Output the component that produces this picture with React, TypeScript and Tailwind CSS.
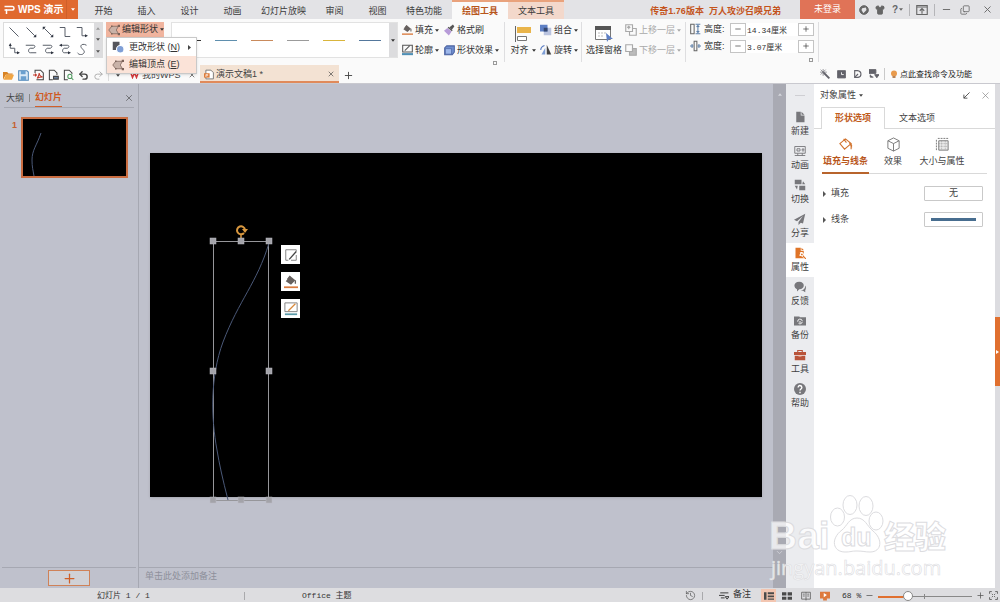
import type { ReactNode } from "react";
import {
  ChevronDown,
  Copy,
  History,
  Minus,
  Plus,
  Redo2,
  Shirt,
  Undo2,
  X,
} from "lucide-react";

function Caret({ className = "" }: { className?: string }) {
  return (
    <svg className={`w-1 h-[3px] shrink-0 ${className}`} viewBox="0 0 5 3">
      <path d="M0 0h5L2.5 3z" fill="currentColor" />
    </svg>
  );
}

function Ico({ children, className = "w-3 h-3" }: { children: ReactNode; className?: string }) {
  return (
    <svg className={`shrink-0 ${className}`} viewBox="0 0 16 16" fill="none" stroke="currentColor" strokeWidth="1.5">
      {children}
    </svg>
  );
}

const connectors: { name: string; d: string; dots?: string }[] = [
  { name: "直线", d: "M2 2l12 12" },
  { name: "箭头", d: "M2 2l11 11", dots: "M15 15v-4l-4 4z" },
  { name: "双箭头", d: "M3 3l10 10", dots: "M15 15v-4l-4 4zM1 1v4l4-4z" },
  { name: "肘形", d: "M1 2h7v12h7" },
  { name: "肘形箭头", d: "M1 2h7v11h6", dots: "M16 13l-4-2v4z" },
  { name: "肘形双箭头", d: "M3 3v4h6v6h5", dots: "M16 13l-4-2v4zM3 0L1 4h4z" },
  { name: "曲线", d: "M1 3h10c3 0 3 3 0 4H7c-3 1-3 6 0 6h8" },
  { name: "曲线箭头", d: "M1 3h10c3 0 3 3 0 4H7c-3 1-3 6 0 6h7", dots: "M16 13l-4-2v4z" },
  { name: "曲线双箭头", d: "M2 3h9c3 0 3 3 0 4H7c-3 1-3 6 0 6h7", dots: "M16 13l-4-2v4zM0 3l4-2v4z" },
  { name: "自由曲线", d: "M14 3C9 0 5 3 7 6s6 5 3 8-7 1-8-1" },
];

const lineStyles = [
  { name: "黑色", color: "bg-[#333333]" },
  { name: "蓝色", color: "bg-[#5f8fae]" },
  { name: "橙色", color: "bg-[#c98a5c]" },
  { name: "灰色", color: "bg-[#9b9b9b]" },
  { name: "黄色", color: "bg-[#d9b53c]" },
  { name: "深蓝", color: "bg-[#54779c]" },
];

const menuTabs = ["开始", "插入", "设计", "动画", "幻灯片放映", "审阅", "视图", "特色功能"];

function PentagonIcon() {
  return (
    <Ico className="w-3 h-3 text-[#7b6359]">
      <path d="M1 8l4-5h9l-3 5 3 5H5z" fill="#c9b2a8" strokeWidth="1" />
      <path d="M13 1h3v3h-3zM13 12h3v3h-3zM4 2h2v2H4zM4 12h2v2H4z" fill="currentColor" stroke="none" />
    </Ico>
  );
}

function TitleBar() {
  return (
    <header className="flex h-[19px] shrink-0 items-stretch bg-[#e3e3e6] text-[9px] text-[#3c3c3c]">
      <button className="flex w-[78px] items-center bg-[#e0692f] pl-1 font-bold text-white text-[10px]">
        <svg className="w-[11px] h-[10px] mr-[3px]" viewBox="0 0 22 20" fill="none" stroke="#fff" strokeWidth="3">
          <path d="M1 3h16c4 0 4 7 0 7H5v8" />
          <path d="M1 10h5" />
        </svg>
        WPS 演示
        <span className="ml-auto flex h-full w-3 items-center justify-center border-l border-[#cf5f28]">
          <Caret />
        </span>
      </button>
      <nav className="flex items-stretch pl-1">
        {menuTabs.map((t) => (
          <button key={t} className="min-w-[43px] px-[7px] pt-1">
            {t}
          </button>
        ))}
        <button className="ml-[3px] w-14 border-t-2 border-[#e9a27c] bg-[#fafafa] pt-[2px] font-bold text-[#b8561b]">绘图工具</button>
        <button className="w-14 border-t-2 border-[#e9a27c] bg-[#f3d8cb] pt-[2px]">文本工具</button>
      </nav>
      <div className="ml-auto flex items-center">
        <a href="#" className="mr-[19px] pt-1 font-bold text-[#c4541c]">
          传奇1.76版本&nbsp; 万人攻沙召唤兄弟
        </a>
        <button className="h-full w-[55px] bg-[#e07357] text-white">未登录</button>
        <div className="flex items-center text-[#666]">
          <button aria-label="换肤" className="ml-1">
            <Ico className="w-[10px] h-[10px]">
              <circle cx="8" cy="8" r="7" fill="#666" />
              <path d="M5 5l6-1 1 4-5 5-3-5z" fill="#e3e3e6" stroke="none" />
            </Ico>
          </button>
          <button aria-label="皮肤" className="ml-[6px]">
            <Shirt size={10} fill="#666" />
          </button>
          <button aria-label="帮助" className="ml-[7px] flex items-center gap-px text-[10px] font-bold">
            ?<Caret />
          </button>
          <span className="mx-[6px] h-3 w-px bg-[#b5b5b8]" />
          <button aria-label="隐藏功能区">
            <Ico className="w-3 h-3">
              <path d="M1 2h14v12H1zM1 4h14M8 13V7M5 9l3-3 3 3" />
            </Ico>
          </button>
          <span className="mx-[6px] h-3 w-px bg-[#b5b5b8]" />
          <button aria-label="最小化" className="mr-2">
            <Minus size={11} />
          </button>
          <button aria-label="还原" className="mr-3">
            <Copy size={10} className="-scale-x-100 rotate-180" />
          </button>
          <button aria-label="关闭" className="mr-[7px]">
            <X size={11} />
          </button>
        </div>
      </div>
    </header>
  );
}

function Cmd({ icon, label, caret, disabled }: { icon: ReactNode; label: string; caret?: boolean; disabled?: boolean }) {
  return (
    <button disabled={disabled} className={`flex h-4 items-center gap-[2px] whitespace-nowrap ${disabled ? "text-[#a9a9a9]" : ""}`}>
      {icon}
      {label}
      {caret && <Caret />}
    </button>
  );
}

function BucketIcon({ className = "w-[11px] h-3" }: { className?: string }) {
  return (
    <Ico className={className}>
      <path d="M7 1l6 5-5 5-6-4z" fill="#66605e" stroke="none" />
      <path d="M13 6v4M4 5l3-4" stroke="#66605e" />
      <path d="M0 14h16" stroke="#d97b3f" strokeWidth="2" />
    </Ico>
  );
}

function Divider() {
  return <span className="h-10 w-px shrink-0 bg-[#dedee0]" />;
}

function SizeField({ id, label, value, icon }: { id: string; label: string; value: string; icon: ReactNode }) {
  return (
    <div className="flex h-[14px] items-center">
      {icon}
      <label htmlFor={id} className="ml-[3px] w-[26px] whitespace-nowrap">
        {label}:
      </label>
      <button aria-label={`减小${label}`} className="flex h-[13px] w-4 items-center justify-center border border-[#c4c4c4] bg-white">
        <Minus size={8} />
      </button>
      <input
        id={id}
        defaultValue={value}
        className="h-[13px] w-[52px] bg-white pl-px font-['Liberation_Mono','Noto_Sans_CJK_SC',monospace] text-[8px] outline-none"
      />
      <button aria-label={`增大${label}`} className="flex h-[13px] w-4 items-center justify-center border border-[#c4c4c4] bg-white">
        <Plus size={8} />
      </button>
    </div>
  );
}

function Ribbon() {
  return (
    <section className="flex h-[46px] shrink-0 items-start bg-[#fafafa] pt-[3px] text-[9px] text-[#333]">
      <div className="ml-[3px] flex h-9 border border-[#dcdcdc] bg-white">
        <div className="grid grid-cols-5 pl-px">
          {connectors.map((c) => (
            <button key={c.name} aria-label={c.name} className="flex h-[17px] w-[17px] items-center justify-center">
              <svg className="w-3 h-3" viewBox="0 0 16 16">
                <path d={c.d} fill="none" stroke="#555b66" strokeWidth="1.3" />
                {c.dots && <path d={c.dots} fill="#2e3440" />}
              </svg>
            </button>
          ))}
        </div>
        <div className="ml-1 flex w-2 flex-col items-center justify-around bg-[#dcdcde] text-[#555]">
          <Caret className="rotate-180 text-[#999]" />
          <Caret />
          <Caret />
        </div>
      </div>

      <div className="relative ml-[3px]">
        <button className="flex h-[15px] w-[58px] items-center gap-[2px] whitespace-nowrap bg-[#f0b49e] pl-[2px]">
          <PentagonIcon />
          编辑形状
          <Caret />
        </button>
        <ul className="absolute left-0 top-[15px] z-20 w-[91px] border border-[#c9c9c9] bg-white shadow">
          <li>
            <button className="flex h-[18px] w-full items-center gap-[5px] pl-[5px]">
              <Ico className="w-3 h-3">
                <path d="M1 1h9v6l-4 5H1z" fill="#55565c" stroke="none" />
                <circle cx="11" cy="11" r="5" fill="#7f9fd6" stroke="#fff" />
              </Ico>
              <span>
                更改形状 (<u>N</u>)
              </span>
              <svg className="ml-auto mr-[5px] w-[3px] h-[5px]" viewBox="0 0 3 5">
                <path d="M0 0v5l3-2.500z" fill="#444" />
              </svg>
            </button>
          </li>
          <li>
            <button className="flex h-[17px] w-full items-center gap-[5px] bg-[#fbe3d8] pl-[5px]">
              <PentagonIcon />
              <span>
                编辑顶点 (<u>E</u>)
              </span>
            </button>
          </li>
        </ul>
      </div>

      <div className="ml-[7px] flex h-9 border border-[#e2e2e2] bg-white">
        {lineStyles.map((l) => (
          <button key={l.name} aria-label={l.name} className="flex w-9 items-center justify-center">
            <span className={`h-px w-[22px] ${l.color}`} />
          </button>
        ))}
        <span className="ml-px flex w-2 items-center justify-center bg-[#dcdcde]">
          <Caret />
        </span>
      </div>

      <div className="ml-1 flex w-[102px]">
        <div className="flex w-[42px] shrink-0 flex-col gap-1">
          <Cmd icon={<BucketIcon />} label="填充" caret />
          <Cmd
            icon={
              <Ico className="w-[11px] h-3">
                <path d="M1 1h14v10H1zM4 9l7-7" stroke="#555" />
                <path d="M0 14h16" stroke="#4f8fb5" strokeWidth="3" />
              </Ico>
            }
            label="轮廓"
            caret
          />
        </div>
        <div className="flex flex-col gap-1">
          <Cmd
            icon={
              <Ico className="w-[11px] h-3">
                <path d="M8 4l5-4 2 3-4 5z" fill="#555" stroke="none" />
                <path d="M5 5l6 5-4 6-7-7z" fill="#b79bd8" stroke="none" />
                <path d="M6 4l6 5" stroke="#555" strokeWidth="2" />
              </Ico>
            }
            label="格式刷"
          />
          <Cmd
            icon={
              <Ico className="w-[11px] h-3">
                <path d="M1 5l3-3h11v9l-3 4H1z" fill="#6f8fd0" stroke="#4a62a0" />
                <path d="M2 6h9v8H2z" fill="#9db7ea" stroke="#4a62a0" strokeWidth="1" />
              </Ico>
            }
            label="形状效果"
            caret
          />
          <span className="-mt-px mr-[2px] h-1 w-1 self-end border border-[#999]" />
        </div>
      </div>
      <Divider />

      <button className="ml-[5px] flex w-[26px] flex-col items-center whitespace-nowrap">
        <svg className="mt-1 w-4 h-4" viewBox="0 0 16 16">
          <path d="M.5 0v16" stroke="#666" />
          <path d="M2 1h14v6H2z" fill="#e9b44a" />
          <path d="M2.500 10.500h9v4h-9z" fill="#fff" stroke="#777" />
        </svg>
        <span className="flex h-4 items-center gap-[3px]">
          对齐
          <Caret />
        </span>
      </button>
      <div className="ml-1 flex flex-col gap-1">
        <Cmd
          icon={
            <Ico className="w-3 h-3">
              <path d="M5 5h10v10H5z" fill="#b9c3df" stroke="none" />
              <path d="M0 1h10v9H0z" fill="#5d7fc4" stroke="none" />
              <path d="M5 5h5v5H5z" fill="#34476f" stroke="none" />
            </Ico>
          }
          label="组合"
          caret
        />
        <Cmd
          icon={
            <Ico className="w-3 h-3">
              <path d="M9 1l6 13H9z" fill="#444" stroke="none" />
              <path d="M7 5v9H2z" fill="#7f9fd6" stroke="none" />
              <path d="M1 8c0-4 2-5 5-6" stroke="#5d7fc4" />
            </Ico>
          }
          label="旋转"
          caret
        />
      </div>
      <span className="w-[3px]" />
      <Divider />
      <button className="ml-1 flex w-9 flex-col items-center whitespace-nowrap">
        <svg className="mt-1 w-[18px] h-4" viewBox="0 0 18 16">
          <path d="M.5.500h15v13H.5z" fill="#fff" stroke="#777" />
          <path d="M0 0h16v4H0z" fill="#555" />
          <path d="M3 7h9M3 10h6" stroke="#bbb" strokeDasharray="2 1" />
          <path d="M11 7l7 6h-4l-2 3z" fill="#5d7fc4" />
        </svg>
        <span className="flex h-4 items-center">选择窗格</span>
      </button>
      <div className="ml-[3px] flex flex-col gap-1">
        <Cmd
          disabled
          icon={
            <Ico className="w-3 h-3">
              <path d="M1 1h9v9H1zM10 6h5v9H6v-5M5 7V4M3 5l2-2 2 2" />
            </Ico>
          }
          label="上移一层"
          caret
        />
        <Cmd
          disabled
          icon={
            <Ico className="w-3 h-3">
              <path d="M1 1h9v9H1z" />
              <path d="M10 6h5v9H6v-5h4z" fill="#bbb" />
            </Ico>
          }
          label="下移一层"
          caret
        />
      </div>
      <span className="w-1" />
      <Divider />
      <div className="mx-1 flex flex-col gap-[3px]">
        <SizeField
          id="shape-height"
          label="高度"
          value="14.34厘米"
          icon={
            <Ico className="w-[11px] h-3">
              <path d="M1 1h5v14H1z" stroke="#666" />
              <path d="M8 1h7M8 15h7M11.500 3v10M9.500 5l2-2 2 2M9.500 11l2 2 2-2" stroke="#5d7fa8" />
            </Ico>
          }
        />
        <SizeField
          id="shape-width"
          label="宽度"
          value="3.07厘米"
          icon={
            <Ico className="w-[11px] h-3">
              <path d="M6 1h4v14H6z" stroke="#666" />
              <path d="M0 8h5M11 8h5M3 5v6M13 5v6" stroke="#5d7fa8" />
            </Ico>
          }
        />
        <span className="mr-px mt-[2px] h-1 w-1 self-end border border-[#999]" />
      </div>
      <Divider />
    </section>
  );
}

function QuickBar() {
  return (
    <div className="flex h-[19px] shrink-0 items-center border-b border-[#c9c9cf] bg-[#fafafa] text-[9px] text-[#444]">
      <div className="flex items-center gap-[4px] pl-[3px] pt-[2px]">
        <button aria-label="打开">
          <Ico className="w-[11px] h-[11px]">
            <path d="M0 3h6l2 2h6v2H4l-4 7z" fill="#d98324" stroke="none" />
            <path d="M4 7h12l-3 7H1z" fill="#f0a544" stroke="none" />
          </Ico>
        </button>
        <button aria-label="保存">
          <Ico className="w-[11px] h-[11px]">
            <path d="M1 1h12l2 2v12H1z" stroke="#4f86b8" fill="#dcebf7" />
            <path d="M4 1h7v5H4zM4 9h8v6H4z" fill="#6ba0cf" stroke="none" />
          </Ico>
        </button>
        <button aria-label="输出为PDF">
          <Ico className="w-[11px] h-3">
            <path d="M3 5V1h8l4 4v10H5" />
            <path d="M6 13c2-3 3-5 3-8 0 3 2 5 5 6-3 0-5 0-8 2z" stroke="#c0392b" />
            <path d="M0 8h5M3 6l2 2-2 2" stroke="#c0392b" />
          </Ico>
        </button>
        <button aria-label="打印">
          <Ico className="w-[11px] h-3">
            <path d="M7 15H2V1h7l4 4v3" />
            <path d="M8 10h7v4H8z" fill="#6a7f9e" />
          </Ico>
        </button>
        <button aria-label="打印预览">
          <Ico className="w-[11px] h-3">
            <path d="M7 15H2V1h7l4 4v2" />
            <circle cx="10" cy="10" r="3" stroke="#4f9a60" />
            <path d="M12 12l3 3" stroke="#4f9a60" />
          </Ico>
        </button>
        <button aria-label="撤销">
          <Undo2 size={11} strokeWidth={3} />
        </button>
        <button aria-label="恢复" className="text-[#aaa]">
          <Redo2 size={11} strokeWidth={2} />
        </button>
        <span className="h-3 w-px bg-[#ddd]" />
        <button aria-label="更多" className="ml-[3px] mr-[10px]">
          <Caret />
        </button>
      </div>
      <div className="flex w-[70px] items-center pt-[2px]">
        <button className="flex items-center gap-[3px] whitespace-nowrap">
          <svg className="w-[9px] h-2" viewBox="0 0 18 14" fill="none" stroke="#d5393c" strokeWidth="3">
            <path d="M1 1l4 11L9 3l4 9 4-11" />
          </svg>
          我的WPS
        </button>
        <button aria-label="关闭我的WPS" className="ml-auto mr-1">
          <X size={8} />
        </button>
      </div>
      <div className="flex h-full w-[139px] items-center border-b-2 border-[#e08a5a] bg-[#f3e2d3] pl-1 pt-[2px]">
        <Ico className="w-[10px] h-[11px] mr-[2px]">
          <path d="M3 1h8l4 4v10H3z" fill="#fff" stroke="#777" />
          <path d="M0 6h9v7H0z" fill="#de7a36" stroke="none" />
          <path d="M3 12V8h3v2H3" stroke="#fff" strokeWidth="1" />
        </Ico>
        <button className="whitespace-nowrap">演示文稿1 *</button>
        <button aria-label="关闭演示文稿1" className="ml-auto mr-1">
          <X size={8} />
        </button>
      </div>
      <button aria-label="新建标签" className="ml-1 pt-[2px]">
        <Plus size={11} />
      </button>
      <div className="ml-auto flex w-[180px] items-center text-[#62626a]">
        <button aria-label="魔棒" className="mr-[7px]">
          <Ico className="w-[10px] h-[10px]">
            <path d="M6 6l9 9" strokeWidth="3" />
            <path d="M5 0v11M0 5h11M1 1l8 8M9 1L1 9" strokeWidth="1" />
          </Ico>
        </button>
        <button aria-label="历史" className="mr-[7px]">
          <Ico className="w-[9px] h-[10px]">
            <path d="M1 2h14v13H1z" fill="currentColor" />
            <path d="M8 5v4h4" stroke="#fff" />
          </Ico>
        </button>
        <button aria-label="文档" className="mr-[7px]">
          <Ico className="w-[9px] h-[10px]">
            <path d="M3 14V2h5c8 1 8 11 1 12z" strokeWidth="2" />
            <path d="M3 14l6-6" strokeWidth="2" />
          </Ico>
        </button>
        <button aria-label="切换界面" className="mr-[5px]">
          <Ico className="w-[10px] h-[10px]">
            <path d="M0 1h11v6H0z" fill="currentColor" />
            <path d="M2 9v4h5M9 9h7l-3.500 5z" fill="currentColor" />
          </Ico>
        </button>
        <span className="mr-[5px] h-3 w-px bg-[#c9c9c9]" />
        <label htmlFor="command-search" aria-label="查找命令">
          <Ico className="w-2 h-[11px]">
            <circle cx="8" cy="6" r="6" fill="#e89a4d" stroke="none" />
            <path d="M5 11h6v4H5z" fill="#b5835a" stroke="none" />
          </Ico>
        </label>
        <input
          id="command-search"
          placeholder="点此查找命令及功能"
          className="min-w-0 flex-1 bg-transparent pl-[2px] text-[8px] outline-none placeholder:text-[#222]"
        />
      </div>
    </div>
  );
}

function SlidePanel() {
  return (
    <aside className="flex w-[139px] shrink-0 flex-col border-r border-[#a6a8b2] text-[9px] text-[#444]">
      <div className="mx-1 flex h-6 items-end border-b border-[#a6a8b2]">
        <button className="h-[18px] pl-[2px]">大纲</button>
        <span className="mx-[5px] mb-[5px] h-2 w-px bg-[#888]" />
        <button className="h-[18px] border-b border-[#d2602a] font-bold text-[#cf5a22]">幻灯片</button>
        <button aria-label="关闭面板" className="mb-1 ml-auto">
          <X size={10} strokeWidth={1.500} />
        </button>
      </div>
      <div className="flex pt-[9px]">
        <span className="w-[21px] pl-3 pt-1 font-bold text-[#c4602f]">1</span>
        <button aria-label="幻灯片 1" className="h-[61px] w-[107px] border-2 border-[#cb6e42] bg-black">
          <svg className="h-full w-full" viewBox="0 0 103 57" fill="none" stroke="#4a5877">
            <path d="M18 14C14 26 9 31 9 41c0 7 1 10 2 16" />
          </svg>
        </button>
      </div>
      <div className="mx-[2px] mt-auto flex h-[21px] items-center border-t border-[#a6a8b2] pl-[46px]">
        <button aria-label="新建幻灯片" className="flex h-4 w-[42px] items-center justify-center border border-[#cf8258] bg-[#d0d1d6] text-[#cf5f28]">
          <Plus size={15} strokeWidth={2} />
        </button>
      </div>
    </aside>
  );
}

const handles = [
  [0, 0],
  [28, 0],
  [56, 0],
  [0, 130],
  [56, 130],
  [0, 259],
  [28, 259],
  [56, 259],
];

function Canvas() {
  return (
    <main className="flex min-w-0 flex-1 flex-col">
      <div className="flex-1 px-[11px] pt-[69px]">
        <div className="relative aspect-[612/344] w-full bg-black shadow">
          <svg className="absolute left-[55px] top-[68px] h-[290px] w-[72px]" viewBox="-8 -20 72 290" fill="none">
            <rect x=".5" y=".5" width="55" height="259" stroke="#96969a" />
            <path d="M56 2C44 42 26 59 10 101C-3 136-2 177 4 209Q7 228 15 259" stroke="#4a5877" />
            <path d="M28 0v-7" stroke="#d9983f" strokeWidth="1.500" />
            <path d="M31-8a4 4 0 1 1 1-3" stroke="#d9983f" strokeWidth="2" />
            <path d="M29-12h6l-3 4z" fill="#d9983f" />
            {handles.map(([x, y]) => (
              <rect key={`${x}-${y}`} x={x - 3} y={y - 3} width="6" height="6" fill="#a3a3a9" stroke="#bdbdc4" strokeWidth=".5" />
            ))}
          </svg>
          <div className="absolute left-[131px] top-[92px] flex flex-col gap-2">
            <button aria-label="形状样式" className="flex h-[19px] w-[19px] items-center justify-center bg-white">
              <Ico className="w-[14px] h-[14px] text-[#777]">
                <path d="M14 8v6H8M5 14H2V2h12v2" strokeWidth="1" />
                <path d="M6 13l8-9" stroke="#444" />
              </Ico>
            </button>
            <button aria-label="填充颜色" className="flex h-[19px] w-[19px] items-center justify-center bg-white">
              <BucketIcon className="w-[14px] h-[14px]" />
            </button>
            <button aria-label="轮廓颜色" className="flex h-[19px] w-[19px] items-center justify-center bg-white">
              <Ico className="w-[14px] h-[14px]">
                <path d="M1 1h14v10H1z" stroke="#777" strokeWidth="1" />
                <path d="M5 10l8-8" stroke="#d98a3c" />
                <path d="M1 14h14" stroke="#5a9aa8" strokeWidth="2" />
              </Ico>
            </button>
          </div>
        </div>
      </div>
      <textarea
        aria-label="备注"
        placeholder="单击此处添加备注"
        className="h-[21px] shrink-0 resize-none overflow-hidden border-t border-[#a6a8b2] px-[6px] pt-1 text-[9px] outline-none placeholder:text-[#8e909b]"
      />
    </main>
  );
}

const tools: { name: string; icon: ReactNode }[] = [
  { name: "新建", icon: <path d="M3 1h6v5h5v9H3zM10 1l4 4h-4z" fill="currentColor" stroke="none" /> },
  {
    name: "动画",
    icon: <path d="M1 2h14v9H1zM1 14h14M4 5h4v3H4zM12 4v5M10 6.500h4M5 11v3M11 11v3" strokeWidth="1.200" />,
  },
  {
    name: "切换",
    icon: <path d="M1 1h9v6H1zM7 9h8v6H7zM12 3l3 4h-4zM1 9h4l-1 5z" fill="currentColor" stroke="none" />,
  },
  { name: "分享", icon: <path d="M15 1L0 9l4 2 8-7-6 8v4l3-3 3 1z" fill="currentColor" stroke="none" /> },
  {
    name: "属性",
    icon: (
      <>
        <path d="M2 1h7v4h4v10H2zM10 1l3 3h-3z" fill="currentColor" stroke="none" />
        <path d="M10 7l-2 4 3 1 4 3M8 8c4-2 6 3 3 4" stroke="#fff" />
        <path d="M12 12l4 4" />
      </>
    ),
  },
  {
    name: "反馈",
    icon: (
      <>
        <path d="M7 1c8 0 8 10 0 10l-3 3v-3C-1 9-1 1 7 1z" fill="currentColor" stroke="none" />
        <path d="M15 6c2 3 0 6 0 6v3l-3-2H9c4-1 6-3 6-7z" fill="currentColor" stroke="none" />
      </>
    ),
  },
  {
    name: "备份",
    icon: (
      <>
        <path d="M0 2h7l1 1h8v11H0z" fill="currentColor" stroke="none" />
        <path d="M5 9a3 3 0 0 1 6-1M11 9a3 3 0 0 1-5 2M8 8v3" stroke="#fff" strokeWidth="1.200" />
      </>
    ),
  },
  {
    name: "工具",
    icon: (
      <>
        <path d="M0 4h16v4H0zM1 9h14v6H1z" fill="#b9543a" stroke="none" />
        <path d="M5 4V2h6v2" stroke="#b9543a" />
        <path d="M6 8h4v2H6z" fill="#f4c4b4" stroke="none" />
      </>
    ),
  },
  {
    name: "帮助",
    icon: (
      <>
        <circle cx="8" cy="8" r="8" fill="currentColor" stroke="none" />
        <path d="M5.500 6c0-4 5-3 5 0 0 2-2.500 2-2.500 4M8 11.500v2" stroke="#fff" strokeWidth="1.800" />
      </>
    ),
  },
];

function ToolRail() {
  return (
    <nav className="flex w-7 shrink-0 flex-col bg-[#ebecef] text-[9px] text-[#3f3f3f]">
      <span className="mx-auto mb-[11px] mt-[11px] h-px w-[10px] bg-[#cfcfd3]" />
      {tools.map((t) => (
        <button key={t.name} className={`flex h-[34px] flex-col items-center pt-1 ${t.name === "属性" ? "bg-white" : ""}`}>
          <Ico className={`w-3 h-3 ${t.name === "属性" ? "text-[#df7427]" : "text-[#77777b]"}`}>{t.icon}</Ico>
          <span className="mt-[2px] leading-3">{t.name}</span>
        </button>
      ))}
    </nav>
  );
}

function Properties() {
  return (
    <aside className="flex w-[181px] shrink-0 flex-col bg-white text-[9px] text-[#444]">
      <div className="flex h-[23px] items-center px-[6px]">
        <button className="flex items-center gap-[3px]">
          对象属性
          <Caret />
        </button>
        <button aria-label="收起" className="ml-auto mr-[10px]">
          <Ico className="w-[7px] h-[7px]">
            <path d="M15 1L2 14M2 6v8h8" strokeWidth="2" />
          </Ico>
        </button>
        <button aria-label="关闭" className="-mr-[2px] text-[#888]">
          <X size={11} strokeWidth={1.500} />
        </button>
      </div>
      <div className="flex h-[22px] border-b border-[#d9d9d9] pl-[7px]">
        <button className="-mb-px w-16 border border-b-0 border-[#d9d9d9] bg-white font-bold text-[#c05c1d]">形状选项</button>
        <button className="w-16 pt-px">文本选项</button>
      </div>
      <div className="mx-2 flex h-[45px] items-stretch border-b border-[#d9d9d9]">
        <button className="-mb-px flex w-[47px] flex-col items-center gap-[1px] whitespace-nowrap border-b-2 border-[#b8642c] pt-2 font-bold text-[#b8561b]">
          <Ico className="w-[15px] h-[15px] text-[#d2742f]">
            <path d="M2 7l6-5 6 5-7 6zM6 2l3 4M14 7v6" strokeWidth="1.200" />
            <path d="M12 5l3 4v3l-3-5z" fill="currentColor" stroke="none" />
          </Ico>
          <span className="leading-4">填充与线条</span>
        </button>
        <button className="flex w-12 flex-col items-center gap-[1px] pt-2">
          <Ico className="w-[15px] h-[15px] text-[#777]">
            <path d="M2 4l6-3 6 3v8l-6 3-6-3zM2 4l6 3 6-3M8 7v8" strokeWidth="1" />
          </Ico>
          <span className="leading-4">效果</span>
        </button>
        <button className="flex w-[50px] flex-col items-center gap-[1px] whitespace-nowrap pt-2">
          <Ico className="w-[15px] h-[15px] text-[#777]">
            <path d="M4 4h10v10H4z" fill="#e9e9e9" strokeWidth="1" />
            <path d="M3 1.500h12M1.500 3v12" strokeWidth="1" strokeDasharray="2 1" />
            <path d="M4 7h10M4 10h10M7 4v10M11 4v10" strokeWidth=".5" strokeDasharray="1 1" />
          </Ico>
          <span className="leading-4">大小与属性</span>
        </button>
      </div>
      <div className="flex flex-col pt-px">
        {["填充", "线条"].map((name) => (
          <div key={name} className="flex h-[26px] items-end pl-[9px] pr-3">
            <button className="flex h-[15px] items-center gap-[5px]">
              <svg className="w-[3px] h-[6px]" viewBox="0 0 3 6">
                <path d="M0 0v6l3-3z" fill="#555" />
              </svg>
              {name}
            </button>
            <button aria-label={`${name}样式`} className="ml-auto flex h-[15px] w-[59px] items-center justify-center rounded-[1px] border border-[#c9c9c9]">
              {name === "填充" ? "无" : <span className="h-[3px] w-[45px] bg-[#476d8f]" />}
            </button>
          </div>
        ))}
      </div>
    </aside>
  );
}

function StatusBar() {
  return (
    <footer className="flex h-[14px] shrink-0 items-center bg-[#dddde0] pt-px font-['Liberation_Mono','Noto_Sans_CJK_SC',monospace] text-[8px] text-[#333]">
      <span className="w-[244px] pl-[97px]">幻灯片 1 / 1</span>
      <span className="h-2 w-px bg-[#a9a9ac]" />
      <span className="ml-[57px]">Office 主题</span>
      <div className="ml-auto flex items-center text-[#555]">
        <button aria-label="历史记录">
          <History size={11} strokeWidth={1.500} />
        </button>
        <span className="ml-[6px] mr-4 h-2 w-px bg-[#a9a9ac]" />
        <button className="flex items-center gap-1 text-[#333]">
          <Ico className="w-[10px] h-[10px]">
            <path d="M2 3h13M0 7h9M3 11h6M10 9h6l-3 4z" />
          </Ico>
          <span className="text-[9px]">备注</span>
        </button>
        <button aria-label="普通视图" className="ml-[10px] flex h-[13px] w-[15px] items-center justify-center bg-[#f3c6b1]">
          <Ico className="w-[10px] h-[10px]">
            <path d="M0 2h4v12H0zM6 2h10v3H6zM6 7h10v3H6zM6 12h10v2H6z" fill="#4a4a4a" stroke="none" />
          </Ico>
        </button>
        <button aria-label="浏览视图" className="ml-[6px]">
          <Ico className="w-[10px] h-[10px]">
            <path d="M0 2h7v5H0zM9 2h7v5H9zM0 9h7v5H0zM9 9h7v5H9z" fill="#4a4a4a" stroke="none" />
          </Ico>
        </button>
        <button aria-label="阅读视图" className="ml-[9px]">
          <Ico className="w-[10px] h-[10px]">
            <path d="M1 2h14v11H1zM8 2v13M3 5h3M10 5h3M3 8h3M10 8h3" strokeWidth="1.200" />
          </Ico>
        </button>
        <button aria-label="放映" className="ml-[9px]">
          <Ico className="w-[10px] h-[10px]">
            <path d="M0 1h16v11h-5v3H5v-3H0z" fill="#dd7a3e" stroke="none" />
            <path d="M6 3v7l5-3.500z" fill="#fff" stroke="none" />
          </Ico>
        </button>
        <label htmlFor="zoom" className="ml-3 w-[23px] whitespace-nowrap text-[#333]">
          68 %
        </label>
        <button aria-label="缩小">
          <Minus size={9} />
        </button>
        <input
          id="zoom"
          type="range"
          defaultValue={30}
          className="mx-1 h-[10px] w-[94px] appearance-none bg-[linear-gradient(#e07030,#e07030),linear-gradient(#888,#888),linear-gradient(#888,#888)] bg-[length:30px_2px,94px_1px,1px_5px] bg-[position:0_5px,0_5px,46px_3px] bg-no-repeat [&::-webkit-slider-thumb]:h-[10px] [&::-webkit-slider-thumb]:w-[10px] [&::-webkit-slider-thumb]:appearance-none [&::-webkit-slider-thumb]:rounded-full [&::-webkit-slider-thumb]:border [&::-webkit-slider-thumb]:border-[#888] [&::-webkit-slider-thumb]:bg-white"
        />
        <button aria-label="放大">
          <Plus size={9} />
        </button>
        <button aria-label="适应窗口" className="ml-1 mr-[2px]">
          <Ico className="w-[9px] h-[9px]">
            <path d="M1 5V1h4M11 1h4v4M15 11v4h-4M5 15H1v-4M5 5l2 2M11 5L9 7M5 11l2-2M11 11L9 9" />
          </Ico>
        </button>
      </div>
    </footer>
  );
}

function Watermark() {
  return (
    <svg
      className="pointer-events-none absolute bottom-[20px] right-[50px] h-[90px] w-[184px]"
      viewBox="764 492 184 90"
      fill="#fff"
      fillOpacity=".75"
      stroke="#dcdcdf"
      strokeWidth="1"
    >
      <ellipse cx="848" cy="505" rx="7" ry="9.500" />
      <ellipse cx="864" cy="506" rx="7" ry="9.500" />
      <ellipse cx="835.500" cy="517" rx="7" ry="9" />
      <ellipse cx="874" cy="521" rx="7" ry="9" />
      <path d="M855 518c-8 0-10 8-15 12-12 9-9 22 3 22 6 0 6-1 12-1s8 1 13 1c12 0 13-13 3-21-6-5-8-13-16-13z" />
      <text x="767" y="549" fontSize="39" fontWeight="bold" fontFamily="Liberation Sans, sans-serif">
        Bai
      </text>
      <text x="839" y="546" fontSize="25" fontWeight="bold" fontFamily="Liberation Sans, sans-serif">
        du
      </text>
      <text x="882" y="548" fontSize="31" fontWeight="900" fontFamily="Noto Sans CJK SC, sans-serif">
        经验
      </text>
      <text x="769" y="575" fontSize="20" strokeWidth=".6" fontFamily="Open Sans, sans-serif">
        jingyan.baidu.com
      </text>
    </svg>
  );
}

export default function App() {
  return (
    <div className="relative flex h-screen flex-col overflow-hidden bg-[#bfc1cc] font-['Liberation_Sans','Noto_Sans_CJK_SC',sans-serif] leading-none">
      <TitleBar />
      <Ribbon />
      <QuickBar />
      <div className="flex min-h-0 flex-1">
        <SlidePanel />
        <Canvas />
        <div className="flex w-[13px] shrink-0 flex-col items-center bg-[#a9aab3] pb-[31px] pt-[9px] text-[#d5d6dc]">
          <Caret className="rotate-180" />
          <ChevronDown size={9} className="mt-auto" />
        </div>
        <ToolRail />
        <Properties />
        <div className="flex w-[5px] shrink-0 flex-col bg-[#dcdce0] pt-[233px]">
          <button aria-label="展开侧栏" className="flex h-[69px] items-center justify-center bg-[#e0702f]">
            <svg className="w-[3px] h-[4px]" viewBox="0 0 3 4">
              <path d="M0 0v4l3-2z" fill="#fff" />
            </svg>
          </button>
        </div>
      </div>
      <StatusBar />
      <Watermark />
    </div>
  );
}
